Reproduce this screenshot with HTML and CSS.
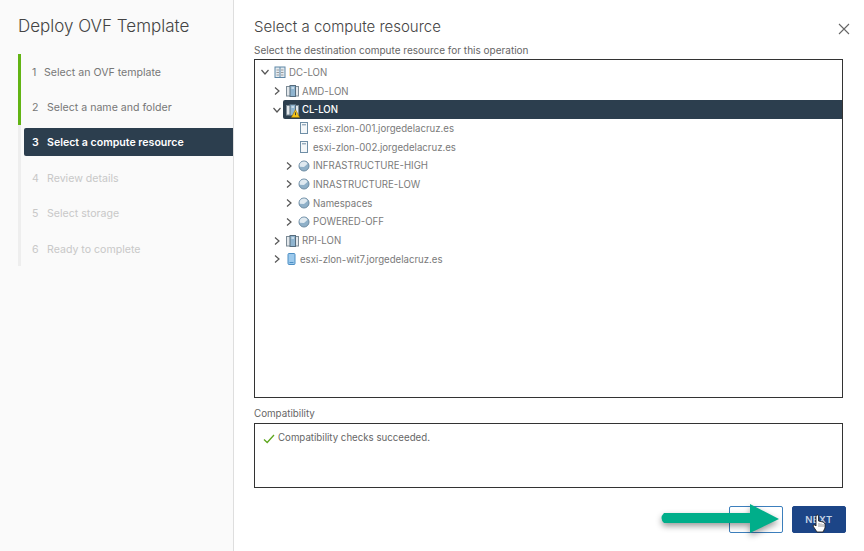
FILE: index.html
```html
<!DOCTYPE html>
<html lang="en">
<head>
    <meta charset="UTF-8">
    <title>Deploy OVF Template</title>
    <link rel="stylesheet" href="styles.css">
</head>
<body>
    <svg class="defs" width="0" height="0">
        <symbol id="chev-r" viewBox="0 0 10 10"><path d="M3 1.5 L7 5 L3 8.5" fill="none" stroke="#565656" stroke-width="1.2"/></symbol>
        <symbol id="chev-d" viewBox="0 0 10 10"><path d="M1.5 3 L5 7 L8.5 3" fill="none" stroke="#565656" stroke-width="1.2"/></symbol>
        <symbol id="dc" viewBox="0 0 12 12"><rect x="1" y="1" width="10" height="10.5" fill="#e3ebf1" stroke="#5f87a6"/><path d="M6 1 V11.5" stroke="#5f87a6" fill="none"/><path d="M2.5 4 H5 M7 4 H9.5 M2.5 6.5 H5 M7 6.5 H9.5 M2.5 9 H5 M7 9 H9.5" stroke="#9a9a9a" fill="none"/></symbol>
        <symbol id="cluster" viewBox="0 0 13 12"><rect x="0.5" y="1.5" width="12" height="9.5" fill="#e2e7eb" stroke="#7d8b96"/><rect x="4" y="0.5" width="5.5" height="11" fill="#8fb4cf" stroke="#566c7d"/><path d="M5.5 3 H8" stroke="#fff"/></symbol>
        <symbol id="host" viewBox="0 0 12 12"><rect x="2.5" y="0.5" width="7" height="11" fill="#f4f7f9" stroke="#6f8ea6"/><path d="M4 2.8 H8" stroke="#6f8ea6"/></symbol>
        <symbol id="host-blue" viewBox="0 0 11 12"><rect x="2" y="0.5" width="7" height="11" rx="1" fill="#9cc9ec" stroke="#4d8fc4"/><path d="M3.5 9.5 H7.5" stroke="#4d8fc4"/></symbol>
        <symbol id="pool" viewBox="0 0 12 12"><circle cx="6" cy="6" r="5" fill="#8fb0c8" stroke="#6c8ba2"/><path d="M1.8 6.8 A4.2 4.2 0 0 1 9.6 3.8 L6 7 Z" fill="#dfe9f0"/></symbol>
    </svg>

    <div class="dialog">
        <div class="sidebar">
            <h1>Deploy OVF Template</h1>
            <ul class="steps">
                <li class="done first"><span class="num">1</span>Select an OVF template</li>
                <li class="done"><span class="num">2</span>Select a name and folder</li>
                <li class="current"><span class="num">3</span>Select a compute resource</li>
                <li class="todo"><span class="num">4</span>Review details</li>
                <li class="todo"><span class="num">5</span>Select storage</li>
                <li class="todo"><span class="num">6</span>Ready to complete</li>
            </ul>
        </div>

        <div class="main">
            <div class="header">
                <h2>Select a compute resource</h2>
                <svg class="close" width="12" height="12" viewBox="0 0 12 12"><path d="M1 1 L11 11 M11 1 L1 11" stroke="#666" stroke-width="1.1" fill="none"/></svg>
            </div>
            <p class="label">Select the destination compute resource for this operation</p>
            <div class="tree">
                <div class="row lvl0"><svg class="chev"><use href="#chev-d"/></svg><svg class="ico"><use href="#dc"/></svg>DC-LON</div>
                <div class="row lvl1"><svg class="chev"><use href="#chev-r"/></svg><svg class="ico ico-wide"><use href="#cluster"/></svg>AMD-LON</div>
                <div class="row lvl1"><svg class="chev"><use href="#chev-d"/></svg>
                    <div class="selected">
                        <span class="warn-ico">
                            <svg class="ico ico-wide"><use href="#cluster"/></svg>
                            <svg class="warn" width="9" height="9" viewBox="0 0 8 8"><path d="M4 0.5 L7.8 7.5 H0.2 Z" fill="#f5c518" stroke="#7a5c00" stroke-width="0.4"/><path d="M4 3 V5.5" stroke="#333" stroke-width="0.8"/></svg>
                        </span>CL-LON
                    </div>
                </div>
                <div class="row lvl2 nochev"><svg class="ico"><use href="#host"/></svg>esxi-zlon-001.jorgedelacruz.es</div>
                <div class="row lvl2 nochev"><svg class="ico"><use href="#host"/></svg>esxi-zlon-002.jorgedelacruz.es</div>
                <div class="row lvl2"><svg class="chev"><use href="#chev-r"/></svg><svg class="ico"><use href="#pool"/></svg>INFRASTRUCTURE-HIGH</div>
                <div class="row lvl2"><svg class="chev"><use href="#chev-r"/></svg><svg class="ico"><use href="#pool"/></svg>INRASTRUCTURE-LOW</div>
                <div class="row lvl2"><svg class="chev"><use href="#chev-r"/></svg><svg class="ico"><use href="#pool"/></svg>Namespaces</div>
                <div class="row lvl2"><svg class="chev"><use href="#chev-r"/></svg><svg class="ico"><use href="#pool"/></svg>POWERED-OFF</div>
                <div class="row lvl1"><svg class="chev"><use href="#chev-r"/></svg><svg class="ico ico-wide"><use href="#cluster"/></svg>RPI-LON</div>
                <div class="row lvl1"><svg class="chev"><use href="#chev-r"/></svg><svg class="ico ico-narrow"><use href="#host-blue"/></svg>esxi-zlon-wit7.jorgedelacruz.es</div>
            </div>
            <p class="label compat-label">Compatibility</p>
            <div class="compat">
                <svg width="12" height="10" viewBox="0 0 12 10"><path d="M1 5.5 L4.2 8.5 L11 1" fill="none" stroke="#5ea61e" stroke-width="1.3"/></svg>
                Compatibility checks succeeded.
            </div>
            <div class="footer">
                <button class="btn btn-outline"></button>
                <button class="btn btn-primary">NEXT</button>
            </div>
        </div>

        <!-- annotation drawn on top of the screenshot -->
        <svg class="arrow" width="125" height="40" viewBox="0 0 125 40">
            <path d="M5 9 H91 V0 L120 15 L91 29 V19 H5 Q0 14 5 9 Z" fill="#00ae8a"/>
        </svg>
        <svg class="hand" width="14" height="19" viewBox="0 0 14 19">
            <path d="M4 1.5 Q5.5 0.5 6.5 1.5 V7 L11 8 Q13 8.5 13 10.5 V14 L11 18 H5 L1 12 Q1 10.5 3 11 L4 12 Z" fill="#fff" stroke="#222" stroke-width="0.9"/>
            <path d="M7 9 V13 M9 9.5 V13 M11 10 V13" stroke="#555" stroke-width="0.6"/>
        </svg>
    </div>
</body>
</html>
```

FILE: styles.css
```css
* {
    margin: 0;
    padding: 0;
    box-sizing: border-box;
    font-family: 'Inter', 'Open Sans', sans-serif;
}
body {
    background-color: #fff;
    color: #666;
    overflow: hidden;
}
.defs {
    position: absolute;
}
.dialog {
    position: relative;
    display: flex;
    width: 864px;
    height: 551px;
}
.sidebar {
    width: 234px;
    flex-shrink: 0;
    background-color: #fafafa;
    border-right: 1px solid #dedede;
    padding: 16px 0 0 18px;
}
.sidebar h1 {
    font-size: 17px;
    line-height: 21px;
    font-weight: 300;
    color: #444;
    margin-bottom: 17px;
}
.steps {
    list-style: none;
    border-left: 3px solid #eee;
    height: 212px;
    position: relative;
}
.steps li {
    display: flex;
    align-items: center;
    height: 35.3px;
    padding-top: 2px;
    font-size: 10.6px;
    color: #777;
    padding-left: 11px;
}
.steps li.done {
    border-left: 3px solid #62b414;
    margin-left: -3px;
}
.num {
    width: 15px;
    flex-shrink: 0;
}
.steps li.first .num {
    width: 12px;
}
.steps li.current {
    margin: 3px 0 4.3px 3px;
    padding-left: 8px;
    height: 28px;
    background-color: #2c3e4e;
    color: #fff;
    font-weight: 600;
    border-radius: 2px 0 0 2px;
}
.steps li.todo {
    color: #c8c8c8;
}
.main {
    flex: 1;
    padding: 16px 18px 0 20px;
}
.header {
    display: flex;
    justify-content: space-between;
    align-items: center;
    height: 21px;
}
.header h2 {
    font-size: 15px;
    font-weight: 300;
    color: #444;
}
.close {
    margin-top: 4px;
    transform: translateX(4px);
}
.label {
    font-size: 10px;
    line-height: 12px;
    color: #666;
    margin-top: 7px;
}
.tree {
    width: 589px;
    height: 339px;
    border: 1px solid #333;
    margin-top: 3px;
    padding-top: 3px;
}
.row {
    display: flex;
    align-items: center;
    height: 18.7px;
    font-size: 9.65px;
    color: #7a7a7a;
}
.lvl0 {
    padding-left: 5px;
}
.lvl1 {
    padding-left: 17px;
}
.lvl2 {
    padding-left: 29px;
}
.nochev {
    padding-left: 43px;
}
.chev {
    width: 10px;
    height: 10px;
    margin-right: 4px;
    flex-shrink: 0;
}
.ico {
    width: 12px;
    height: 12px;
    margin-right: 3px;
    flex-shrink: 0;
}
.ico-wide {
    width: 13px;
}
.ico-narrow {
    width: 11px;
}
.selected {
    flex: 1;
    display: flex;
    align-items: center;
    height: 18.7px;
    margin-left: -3px;
    padding-left: 3px;
    background-color: #2c3e4e;
    color: #fff;
    font-weight: 500;
    border-radius: 2px 0 0 2px;
}
.warn-ico {
    position: relative;
    display: flex;
}
.warn {
    position: absolute;
    right: 2px;
    bottom: -2px;
}
.compat-label {
    margin-top: 10px;
    font-size: 9.8px;
}
.compat {
    width: 589px;
    height: 65px;
    border: 1px solid #333;
    margin-top: 3px;
    padding: 8px 8px 0 8px;
    font-size: 9.7px;
    line-height: 12px;
    color: #666;
    display: flex;
    align-items: flex-start;
    gap: 3px;
}
.compat svg {
    margin-top: 2px;
}
.footer {
    display: flex;
    justify-content: flex-end;
    gap: 9px;
    margin-top: 18px;
}
.btn {
    width: 54px;
    height: 27px;
    border-radius: 2px;
    font-size: 9.5px;
    font-weight: 600;
    letter-spacing: 0.5px;
    background: none;
    border: 1px solid #3c7fbd;
}
.btn-primary {
    background-color: #1c4587;
    border-color: #1c4587;
    color: #c5d3e6;
}
.arrow {
    position: absolute;
    left: 659px;
    top: 504px;
    filter: drop-shadow(0 3px 3px rgba(0, 0, 0, 0.4));
}
.hand {
    position: absolute;
    left: 812px;
    top: 514px;
}
```
